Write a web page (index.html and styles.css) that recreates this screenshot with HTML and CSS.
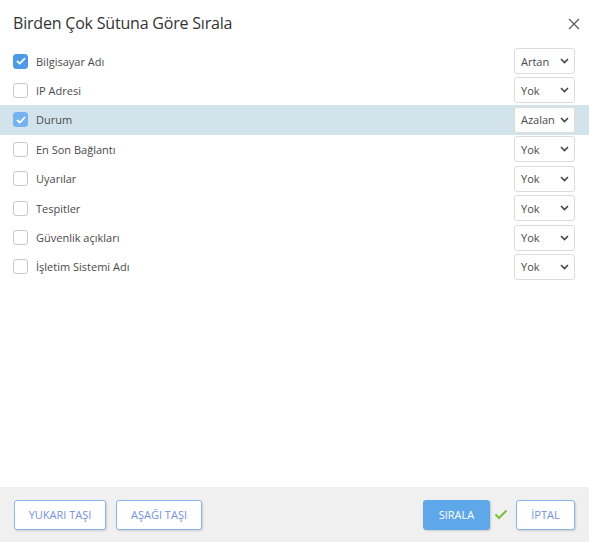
FILE: index.html
```html
<!DOCTYPE html>
<html lang="tr">
<head>
<meta charset="utf-8">
<link rel="stylesheet" href="styles.css">
</head>
<body>
<div class="dialog">
  <div class="header">
    <div class="title">Birden Çok Sütuna Göre Sırala</div>
    <svg class="close" width="12" height="12" viewBox="0 0 12 12"><path d="M1 1L11 11M11 1L1 11" stroke="#555" stroke-width="1.1" fill="none"/></svg>
  </div>
  <div class="list">
    <div class="row"><span class="cb checked"><svg width="10" height="8" viewBox="0 0 10 8"><path d="M1 4L3.8 6.6L9 1.2" stroke="#fff" stroke-width="1.8" fill="none"/></svg></span><span class="label">Bilgisayar Adı</span><div class="sel"><span>Artan</span><svg class="chev" width="9" height="6" viewBox="0 0 9 6"><path d="M1 1L4.5 4.5L8 1" stroke="#444" stroke-width="1.6" fill="none"/></svg></div></div>
    <div class="row"><span class="cb"></span><span class="label">IP Adresi</span><div class="sel"><span>Yok</span><svg class="chev" width="9" height="6" viewBox="0 0 9 6"><path d="M1 1L4.5 4.5L8 1" stroke="#444" stroke-width="1.6" fill="none"/></svg></div></div>
    <div class="row active"><span class="cb checked light"><svg width="10" height="8" viewBox="0 0 10 8"><path d="M1 4L3.8 6.6L9 1.2" stroke="#fff" stroke-width="1.8" fill="none"/></svg></span><span class="label">Durum</span><div class="sel"><span>Azalan</span><svg class="chev" width="9" height="6" viewBox="0 0 9 6"><path d="M1 1L4.5 4.5L8 1" stroke="#444" stroke-width="1.6" fill="none"/></svg></div></div>
    <div class="row"><span class="cb"></span><span class="label">En Son Bağlantı</span><div class="sel"><span>Yok</span><svg class="chev" width="9" height="6" viewBox="0 0 9 6"><path d="M1 1L4.5 4.5L8 1" stroke="#444" stroke-width="1.6" fill="none"/></svg></div></div>
    <div class="row"><span class="cb"></span><span class="label">Uyarılar</span><div class="sel"><span>Yok</span><svg class="chev" width="9" height="6" viewBox="0 0 9 6"><path d="M1 1L4.5 4.5L8 1" stroke="#444" stroke-width="1.6" fill="none"/></svg></div></div>
    <div class="row"><span class="cb"></span><span class="label">Tespitler</span><div class="sel"><span>Yok</span><svg class="chev" width="9" height="6" viewBox="0 0 9 6"><path d="M1 1L4.5 4.5L8 1" stroke="#444" stroke-width="1.6" fill="none"/></svg></div></div>
    <div class="row"><span class="cb"></span><span class="label">Güvenlik açıkları</span><div class="sel"><span>Yok</span><svg class="chev" width="9" height="6" viewBox="0 0 9 6"><path d="M1 1L4.5 4.5L8 1" stroke="#444" stroke-width="1.6" fill="none"/></svg></div></div>
    <div class="row"><span class="cb"></span><span class="label">İşletim Sistemi Adı</span><div class="sel"><span>Yok</span><svg class="chev" width="9" height="6" viewBox="0 0 9 6"><path d="M1 1L4.5 4.5L8 1" stroke="#444" stroke-width="1.6" fill="none"/></svg></div></div>
  </div>
  <div class="footer">
    <button class="btn w1">YUKARI TAŞI</button>
    <button class="btn w2">AŞAĞI TAŞI</button>
    <div class="spacer"></div>
    <button class="btn primary">SIRALA</button>
    <svg class="ok" width="14" height="11" viewBox="0 0 14 11"><path d="M1.5 5.5L5 9L12.5 1.5" stroke="#7cc242" stroke-width="2.2" fill="none"/></svg>
    <button class="btn cancel">İPTAL</button>
  </div>
</div>
</body>
</html>
```
FILE: styles.css
```css
* { box-sizing: border-box; }
html, body { margin: 0; padding: 0; }
body {
  width: 589px;
  height: 542px;
  background: #fff;
  font-family: "Open Sans", "Noto Sans", sans-serif;
  color: #333;
  overflow: hidden;
}
.dialog {
  display: flex;
  flex-direction: column;
  height: 542px;
}
.header {
  display: flex;
  align-items: center;
  justify-content: space-between;
  height: 46px;
  padding: 0 9px 0 13px;
}
.title {
  font-size: 16px;
  color: #333;
  letter-spacing: -0.2px;
}
.close { margin-top: 1px; }
.list {
  flex: 1;
  display: flex;
  flex-direction: column;
  padding-top: 0.3px;
}
.row {
  display: flex;
  align-items: center;
  height: 29.43px;
  padding: 0 14px 0 13px;
}
.row.active { background: #d3e3ec; }
.cb {
  width: 15px;
  height: 15px;
  border: 1px solid #c9c9c9;
  border-radius: 3px;
  background: #fff;
  display: flex;
  align-items: center;
  justify-content: center;
  flex: none;
}
.cb.checked {
  background: #4d9be6;
  border-color: #4d9be6;
}
.cb.checked.light {
  background: #74b3ef;
  border-color: #74b3ef;
}
.label {
  margin-left: 8px;
  font-size: 11px;
  color: #4a4a4a;
  flex: 1;
}
.sel {
  width: 61px;
  height: 26px;
  border: 1px solid #dcdcdc;
  border-radius: 3px;
  background: #fff;
  display: flex;
  align-items: center;
  justify-content: space-between;
  padding: 0 5px 0 6px;
  font-size: 11px;
  color: #4a4a4a;
}
.footer {
  height: 55px;
  background: #f0f0f0;
  display: flex;
  align-items: center;
  padding: 0 14px 0 14px;
}
.btn {
  height: 30px;
  border: 1px solid #86b9ea;
  border-radius: 3px;
  background: #fff;
  color: #7592da;
  font-family: "Open Sans", "Noto Sans", sans-serif;
  font-size: 11px;
  padding: 0;
  box-shadow: 1px 1px 2px rgba(0,0,0,0.15);
}
.w1 { width: 92px; }
.w2 { width: 86px; margin-left: 10px; }
.spacer { flex: 1; }
.primary {
  width: 67px;
  background: #5ea7e9;
  border-color: #5ea7e9;
  color: #fff;
}
.ok { margin: 0 8px 0 4px; }
.cancel { width: 59px; }
```
